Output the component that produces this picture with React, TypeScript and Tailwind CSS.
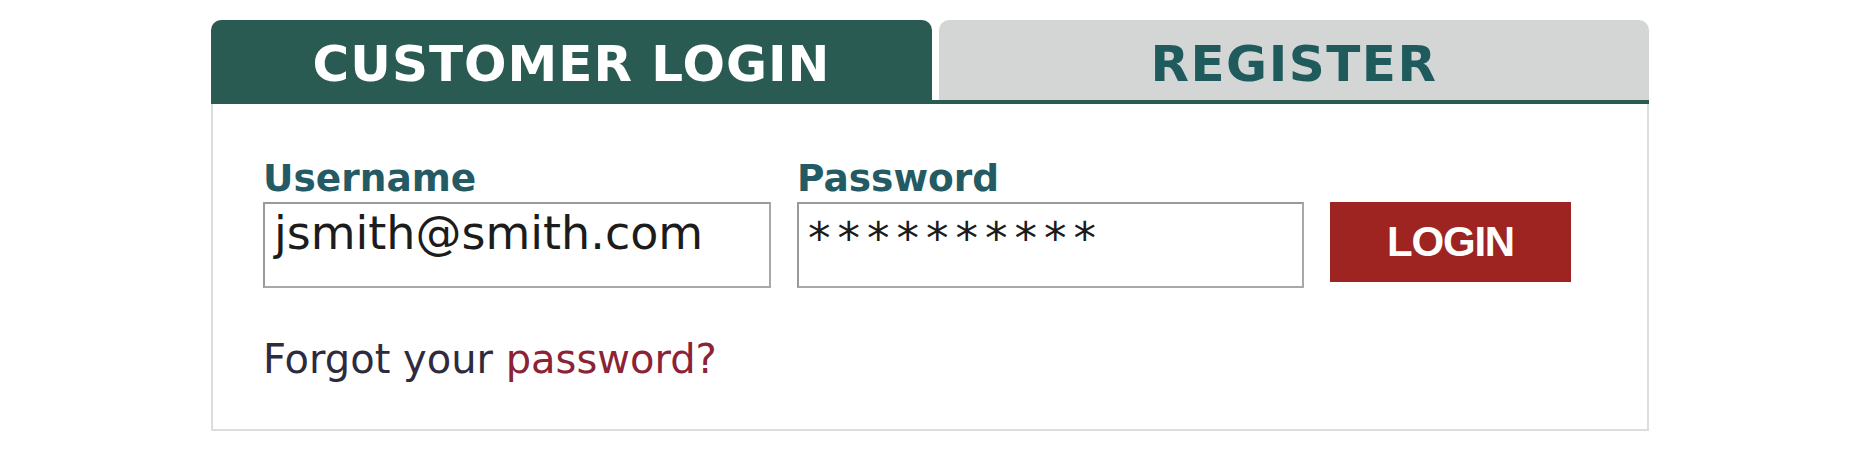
import React from "react";

export default function App() {
  return (
    <div className="w-[1852px] h-[450px] bg-white pt-[20px] pl-[211px]" style={{ fontFamily: '"DejaVu Sans", Verdana, sans-serif' }}>
      <div className="w-[1438px]">
        <div className="flex gap-[7px] h-[80px]">
          <div className="w-[721px] bg-[#2a5b52] rounded-t-[10px] flex justify-center items-start pt-[19px]">
            <span className="text-[50px] leading-none font-bold text-white tracking-[1px]">
              CUSTOMER LOGIN
            </span>
          </div>
          <div className="flex-1 bg-[#d4d6d6] rounded-t-[10px] flex justify-center items-start pt-[19px]">
            <span className="text-[50px] leading-none font-bold text-[#1f5a5c] tracking-[1.5px]">
              REGISTER
            </span>
          </div>
        </div>
        <div className="h-[4px] bg-[#2a5b52]" />
        <div className="border-x-2 border-b-2 border-[#dcdede] pl-[50px] pt-[56px] pb-[50px]">
          <div className="grid grid-cols-[508px_507px_241px] gap-x-[26px] gap-y-[4px]">
            <div className="text-[37.5px] leading-none font-bold text-[#235a64]">Username</div>
            <div className="text-[37.5px] leading-none font-bold text-[#235a64]">Password</div>
            <div />
            <div className="h-[86px] border-2 border-[#a8a8a8] border-t-[#9a9a9a] border-l-[#9a9a9a] pl-[9px] pt-[6px]">
              <span className="text-[46px] leading-none text-[#1c1c1c]">jsmith@smith.com</span>
            </div>
            <div className="h-[86px] border-2 border-[#a8a8a8] border-t-[#9a9a9a] border-l-[#9a9a9a] pl-[9px] pt-[12px]">
              <span className="text-[45px] leading-none text-[#1c1c1c] tracking-[7px]">**********</span>
            </div>
            <div className="h-[80px] bg-[#9d2421] flex items-center justify-center">
              <span className="text-[42px] leading-none font-bold text-white tracking-[-1.2px]" style={{ fontFamily: '"Liberation Sans", Arial, sans-serif' }}>
                LOGIN
              </span>
            </div>
          </div>
          <div className="mt-[51px] text-[40px] leading-none">
            <span className="text-[#2f2b3f]">Forgot your </span>
            <span className="text-[#8c2235]">password?</span>
          </div>
        </div>
      </div>
    </div>
  );
}
